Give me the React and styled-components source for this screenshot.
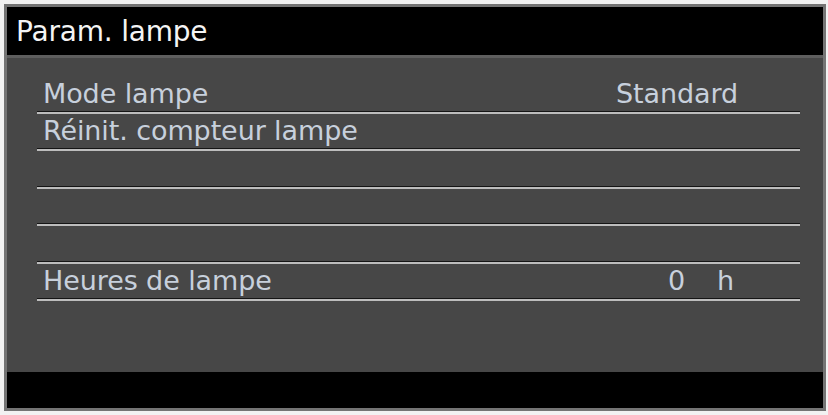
import React from "react";
import styled, { createGlobalStyle } from "styled-components";

const Global = createGlobalStyle`
  html, body { margin: 0; padding: 0; background: #f2f2f2; }
  body { font-family: "DejaVu Sans", Verdana, sans-serif; }
`;

const Frame = styled.div`
  box-sizing: border-box;
  margin: 4px 0 0 4px;
  width: 822px;
  height: 407px;
  border: 3px solid #747474;
  display: flex;
  flex-direction: column;
  background: #474747;
`;

const Header = styled.div`
  box-sizing: border-box;
  height: 51px;
  background: #000;
  border-bottom: 3px solid #5e5e5e;
  padding: 12px 0 0 9px;
  color: #f4f4f4;
  font-size: 28px;
  line-height: 26px;
  letter-spacing: -0.2px;
`;

const Body = styled.div`
  box-sizing: border-box;
  flex: 1;
  background: #474747;
  padding: 18px 23px 0 30px;
  display: flex;
  flex-direction: column;
`;

const Row = styled.div`
  box-sizing: border-box;
  height: 37.5px;
  display: flex;
  align-items: flex-end;
  justify-content: space-between;
  padding: 0 62px 7px 6px;
  position: relative;
  color: #c7d0dc;
  font-size: 27px;
  line-height: 26px;
  letter-spacing: -0.1px;
  &::after {
    content: "";
    position: absolute;
    left: 0;
    right: 0;
    bottom: 0;
    height: 3px;
    background: linear-gradient(#151515 0 1px, #bdbdbd 1px 100%);
  }
`;

const Label = styled.span``;

const Value = styled.span`
  display: flex;
  align-items: baseline;
`;

const Unit = styled.span`
  margin-left: 32px;
  margin-right: 4px;
`;

const Footer = styled.div`
  height: 36px;
  background: #000;
`;

const rows = [
  { label: "Mode lampe", value: "Standard" },
  { label: "Réinit. compteur lampe" },
  {},
  {},
  {},
  { label: "Heures de lampe", value: "0", unit: "h" },
];

export default function App() {
  return (
    <>
      <Global />
      <Frame>
        <Header>Param. lampe</Header>
        <Body>
          {rows.map((r, i) => (
            <Row key={i}>
              <Label>{r.label || "\u00a0"}</Label>
              {r.value && (
                <Value>
                  {r.value}
                  {r.unit && <Unit>{r.unit}</Unit>}
                </Value>
              )}
            </Row>
          ))}
        </Body>
        <Footer />
      </Frame>
    </>
  );
}
